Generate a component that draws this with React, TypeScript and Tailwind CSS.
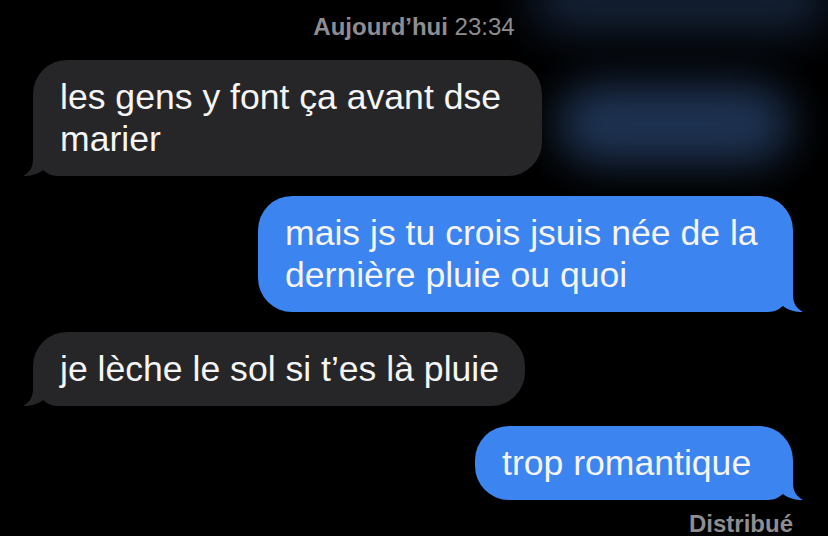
import React from "react";

type Side = "in" | "out";

function Tail({ side, color }: { side: Side; color: string }) {
  // Tail hooked to the bottom corner on the sender's side
  const pos = side === "in" ? "left-[-12px]" : "right-[-12px] -scale-x-100";
  return (
    <svg
      className={`absolute bottom-0 ${pos}`}
      width="50"
      height="40"
      viewBox="0 0 50 40"
      aria-hidden
    >
      <path
        d="M12 0 L12 23 C12 31 9 36 2 40 C10 40 17 38 22 34 C26 37 30 40 37 40 L50 40 L50 0 Z"
        fill={color}
      />
    </svg>
  );
}

function Bubble({
  side,
  lines,
  width,
}: {
  side: Side;
  lines: string[];
  width: string;
}) {
  const color = side === "in" ? "#262628" : "#3c84f0";
  const bg = side === "in" ? "bg-[#262628]" : "bg-[#3c84f0]";
  const align = side === "in" ? "self-start ml-[33px]" : "self-end mr-[35px]";
  return (
    <div
      className={`relative ${align} ${width} ${bg} rounded-[34px] pl-[27px] pr-[20px] py-4 text-[35.6px] leading-[42px] text-[#f5f5f5] whitespace-nowrap`}
    >
      <Tail side={side} color={color} />
      <div className="relative">
        {lines.map((l, i) => (
          <div key={i}>{l}</div>
        ))}
      </div>
    </div>
  );
}

export default function App() {
  return (
    <div
      className="relative w-[828px] h-[536px] overflow-hidden bg-black"
      style={{ fontFamily: '"Liberation Sans", Arial, sans-serif' }}
    >
      {/* blurred content behind on the right */}
      <div className="absolute left-[530px] top-[-34px] w-[300px] h-[66px] rounded-full bg-[#1b2c47] blur-[24px] opacity-80" />
      <div className="absolute left-[556px] top-[84px] w-[236px] h-[80px] rounded-[40px] bg-[#22395c] blur-[22px] opacity-90" />

      <div className="relative flex flex-col pt-[13px]">
        <div className="text-center text-[24px] leading-[28px] text-[#8d8d92] mb-[19px]">
          <span className="font-semibold">Aujourd’hui</span> 23:34
        </div>

        <div className="flex flex-col gap-[20px]">
          <Bubble
            side="in"
            width="w-[509px]"
            lines={["les gens y font ça avant dse", "marier"]}
          />
          <Bubble
            side="out"
            width="w-[535px]"
            lines={["mais js tu crois jsuis née de la", "dernière pluie ou quoi"]}
          />
          <Bubble
            side="in"
            width="w-[492px]"
            lines={["je lèche le sol si t’es là pluie"]}
          />
          <Bubble side="out" width="w-[318px]" lines={["trop romantique"]} />
        </div>

        <div className="self-end mr-[35px] mt-[12px] text-[24px] leading-[24px] font-semibold text-[#8d8d92]">
          Distribué
        </div>
      </div>
    </div>
  );
}
